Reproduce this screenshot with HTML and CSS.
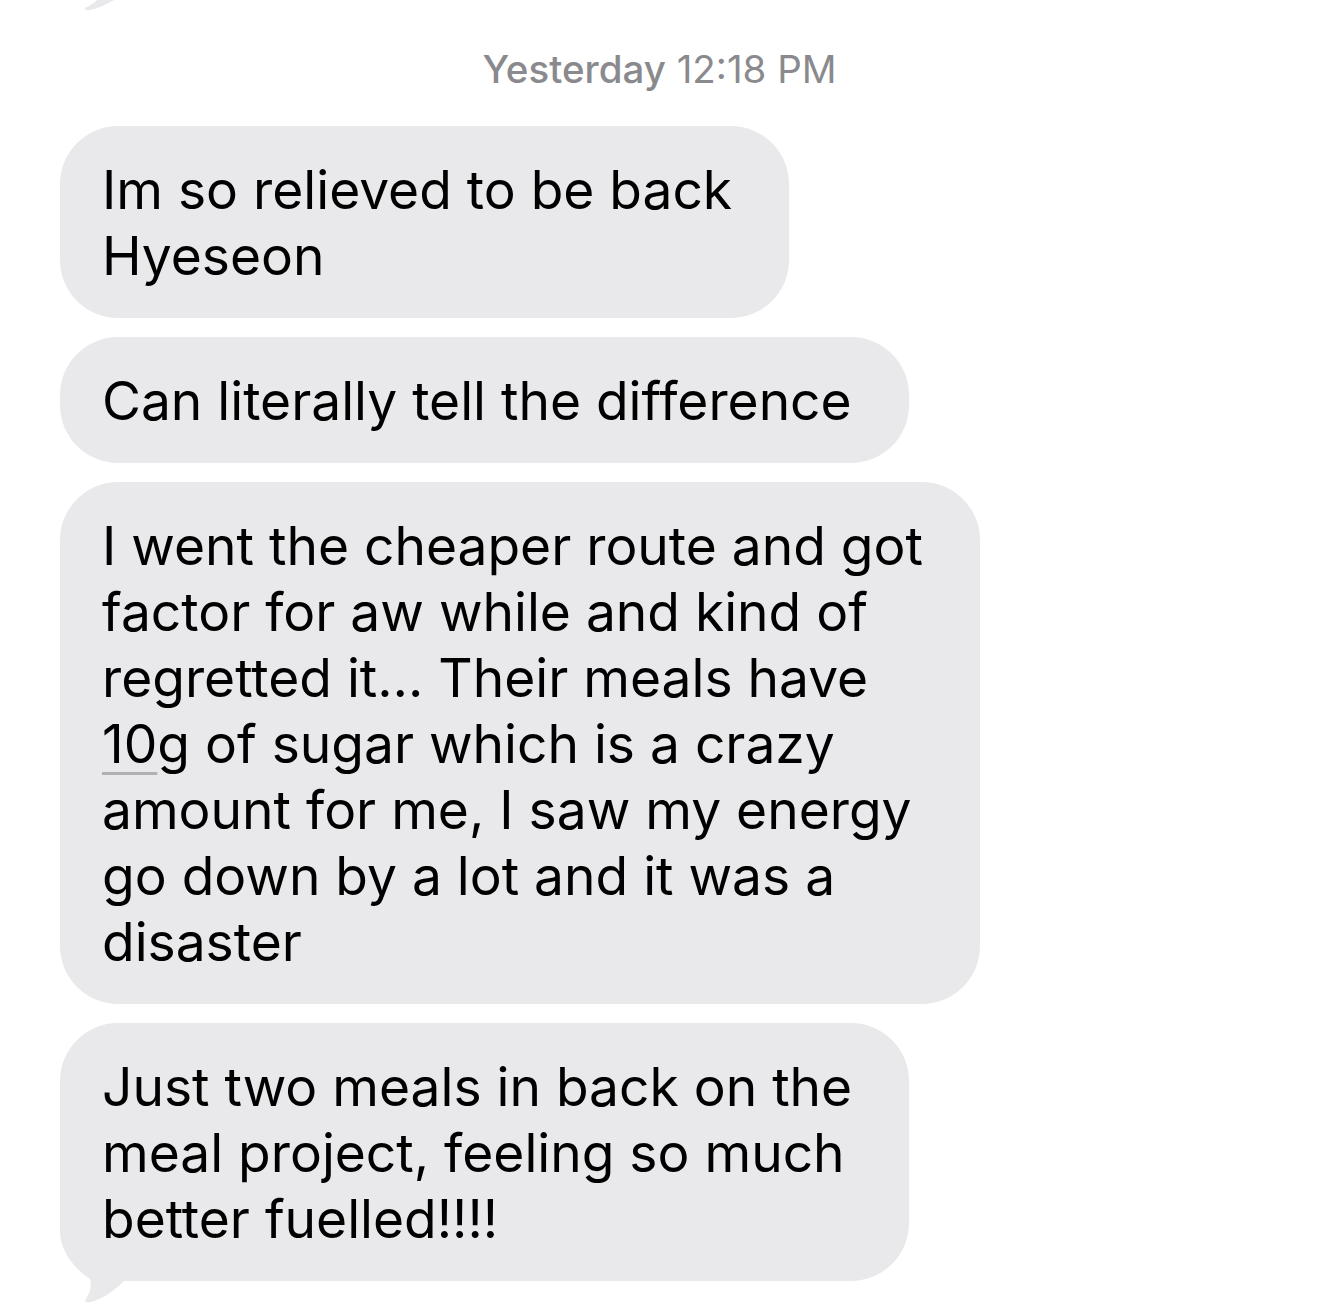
FILE: index.html
```html
<!DOCTYPE html>
<html lang="en">
  <head>
    <meta charset="UTF-8" />
    <title>Messages</title>
    <link rel="stylesheet" href="styles.css">
  </head>
  <body>
    <!-- tail of the previous bubble, cut off at the top -->
    <svg class="prev-tail" width="40" height="12" viewBox="0 0 40 12">
      <path d="M1 8 C6 5 11 3 13 0 L30 0 C22 5 12 9 5 10 C2 10.5 0 9.5 1 8 Z" fill="#e9e9eb" />
    </svg>

    <div class="thread">
      <div class="stamp"><b>Yesterday</b> 12:18 PM</div>

      <div class="bubble">Im so relieved to be back<br>Hyeseon</div>
      <div class="bubble">Can literally tell the difference</div>
      <div class="bubble">
        I went the cheaper route and got<br>
        factor for aw while and kind of<br>
        regretted it… Their meals have<br>
        <span class="detected">10</span>g of sugar which is a crazy<br>
        amount for me, I saw my energy<br>
        go down by a lot and it was a<br>
        disaster
      </div>
      <div class="bubble last">
        <svg class="tail" width="70" height="80" viewBox="0 0 70 80">
          <path d="M0 0 L0 8 C0 26 12 44 30 56 C32 62 30 70 26 76 C24 79 27 80 31 79 C42 76 54 68 64 58 L70 58 L70 0 Z" fill="#e9e9eb" />
        </svg>
        <span class="text">Just two meals in back on the<br>
        meal project, feeling so much<br>
        better fuelled!!!!</span>
      </div>
    </div>
  </body>
</html>
```

FILE: styles.css
```css
body {
  margin: 0;
  background: #fff;
  font-family: Inter, "Noto Sans", sans-serif;
  color: #000;
  position: relative;
  height: 1304px;
  overflow: hidden;
}

.prev-tail {
  position: absolute;
  top: 0;
  left: 84px;
}

.thread {
  display: flex;
  flex-direction: column;
  align-items: flex-start;
  gap: 19px;
  padding: 46px 0 0 60px;
}

/* 时间戳 */
.stamp {
  align-self: stretch;
  margin-left: -60px;
  text-align: center;
  font-size: 38.5px;
  line-height: 46px;
  color: #8a8a8e;
  margin-bottom: 15px;
}
.stamp b {
  font-weight: 500;
}

.bubble {
  position: relative;
  background: #e9e9eb;
  border-radius: 58px;
  padding: 31px 57px 29px 42px;
  font-size: 53.3px;
  line-height: 66px;
  white-space: nowrap;
}

/* 识别出的数字下划线 */
.detected {
  text-decoration: underline;
  text-decoration-color: #b0b0b2;
  text-decoration-thickness: 3px;
  text-underline-offset: 9px;
}

/* 最后一条消息的尾巴，压在文字下面 */
.tail {
  position: absolute;
  left: 0;
  bottom: -22px;
}
.last .text {
  position: relative;
}
```
